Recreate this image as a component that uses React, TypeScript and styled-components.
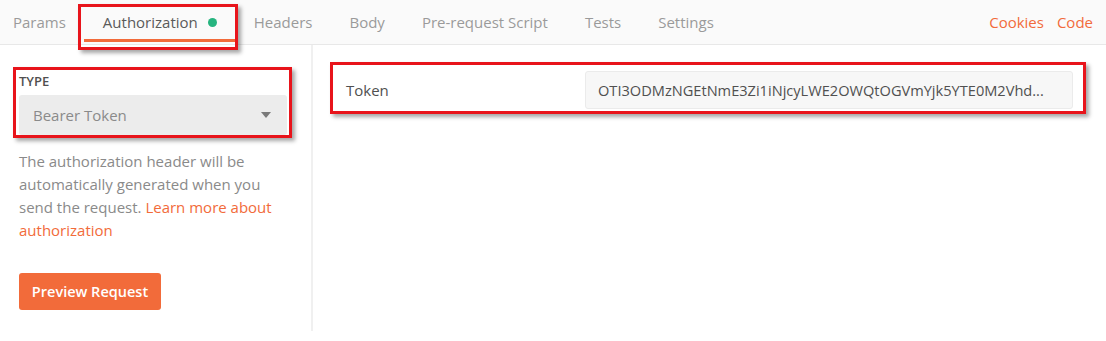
import React from "react";
import styled, { createGlobalStyle } from "styled-components";

const Global = createGlobalStyle`
  html, body { margin: 0; padding: 0; background: #ffffff; }
  body { font-family: "Open Sans", "Noto Sans", sans-serif; font-size: 15px; color: #505050; }
  * { box-sizing: border-box; }
`;

const Page = styled.div`
  position: relative;
  width: 1106px;
  height: 341px;
  background: #ffffff;
  overflow: hidden;
`;

const TabBar = styled.div`
  display: flex;
  align-items: stretch;
  height: 45px;
  background: #fafafa;
  border-bottom: 1px solid #e8e8e8;
`;

const Tab = styled.div<{ $active?: boolean; $first?: boolean }>`
  position: relative;
  display: flex;
  align-items: center;
  gap: 10px;
  padding: 0 18px 0 ${(p) => (p.$first ? "13px" : "19px")};
  color: ${(p) => (p.$active ? "#5a5a5a" : "#9a9a9a")};
  font-size: 15px;
  white-space: nowrap;
  &::after {
    content: "";
    display: ${(p) => (p.$active ? "block" : "none")};
    position: absolute;
    left: 0;
    right: 0;
    bottom: 2px;
    height: 3px;
    background: #f26b3a;
  }
`;

const Dot = styled.span`
  width: 9px;
  height: 9px;
  border-radius: 50%;
  background: #26b47f;
`;

const TabLinks = styled.div`
  margin-left: auto;
  display: flex;
  align-items: center;
  gap: 13px;
  padding-right: 13px;
`;

const OrangeLink = styled.span`
  color: #f26b3a;
  font-size: 15px;
`;

const Body = styled.div`
  display: flex;
  height: 287px;
`;

const LeftPanel = styled.div`
  width: 313px;
  height: 286px;
  border-right: 2px solid #f0f0f0;
  padding: 27px 24px 0 19px;
  display: flex;
  flex-direction: column;
`;

const TypeLabel = styled.div`
  font-size: 13px;
  font-weight: 600;
  color: #505050;
  line-height: 16px;
  height: 16px;
  margin-top: 1px;
`;

const Select = styled.div`
  margin-top: 6px;
  height: 40px;
  width: 268px;
  background: #ececec;
  border-radius: 3px;
  display: flex;
  align-items: center;
  justify-content: space-between;
  padding: 0 16px 0 14px;
  color: #8a8a8a;
  font-size: 15px;
`;

const Caret = styled.span`
  width: 0;
  height: 0;
  border-left: 5px solid transparent;
  border-right: 5px solid transparent;
  border-top: 6px solid #7a7a7a;
`;

const Description = styled.p`
  margin: 15px 0 0;
  font-size: 15px;
  line-height: 23px;
  color: #8a8a8a;
`;

const InlineLink = styled.span`
  color: #f26b3a;
`;

const PrimaryButton = styled.button`
  margin-top: 31px;
  align-self: flex-start;
  width: 142px;
  height: 37px;
  border: none;
  border-radius: 3px;
  background: #f26b3a;
  color: #ffffff;
  font-family: "Open Sans", "Noto Sans", sans-serif;
  font-weight: 600;
  font-size: 14.5px;
  padding: 0;
`;

const RightPanel = styled.div`
  flex: 1;
  padding: 26px 33px 0 33px;
`;

const FieldRow = styled.div`
  display: grid;
  grid-template-columns: 239px 1fr;
  align-items: center;
`;

const FieldLabel = styled.div`
  font-size: 15px;
  color: #505050;
`;

const TokenInput = styled.div`
  height: 38px;
  background: #f7f7f7;
  border: 1px solid #ebebeb;
  border-radius: 3px;
  display: flex;
  align-items: center;
  padding: 0 12px;
  color: #505050;
  font-size: 14.6px;
  white-space: nowrap;
  overflow: hidden;
`;

const Highlight = styled.div<{ $x: number; $y: number; $w: number; $h: number }>`
  position: absolute;
  left: ${(p) => p.$x}px;
  top: ${(p) => p.$y}px;
  width: ${(p) => p.$w}px;
  height: ${(p) => p.$h}px;
  border: 3px solid #e8141b;
  box-shadow: 3px 3px 4px rgba(0, 0, 0, 0.35);
  pointer-events: none;
`;

export default function App() {
  return (
    <Page>
      <Global />
      <TabBar>
        <Tab $first>Params</Tab>
        <Tab $active>
          Authorization
          <Dot />
        </Tab>
        <Tab>Headers</Tab>
        <Tab>Body</Tab>
        <Tab>Pre-request Script</Tab>
        <Tab>Tests</Tab>
        <Tab>Settings</Tab>
        <TabLinks>
          <OrangeLink>Cookies</OrangeLink>
          <OrangeLink>Code</OrangeLink>
        </TabLinks>
      </TabBar>
      <Body>
        <LeftPanel>
          <TypeLabel>TYPE</TypeLabel>
          <Select>
            Bearer Token
            <Caret />
          </Select>
          <Description>
            The authorization header will be automatically generated when you
            send the request. <InlineLink>Learn more about authorization</InlineLink>
          </Description>
          <PrimaryButton>Preview Request</PrimaryButton>
        </LeftPanel>
        <RightPanel>
          <FieldRow>
            <FieldLabel>Token</FieldLabel>
            <TokenInput>OTI3ODMzNGEtNmE3Zi1iNjcyLWE2OWQtOGVmYjk5YTE0M2Vhd...</TokenInput>
          </FieldRow>
        </RightPanel>
      </Body>
      <Highlight $x={78} $y={4} $w={160} $h={46} />
      <Highlight $x={13} $y={67} $w={279} $h={71} />
      <Highlight $x={330} $y={62} $w={756} $h={52} />
    </Page>
  );
}
